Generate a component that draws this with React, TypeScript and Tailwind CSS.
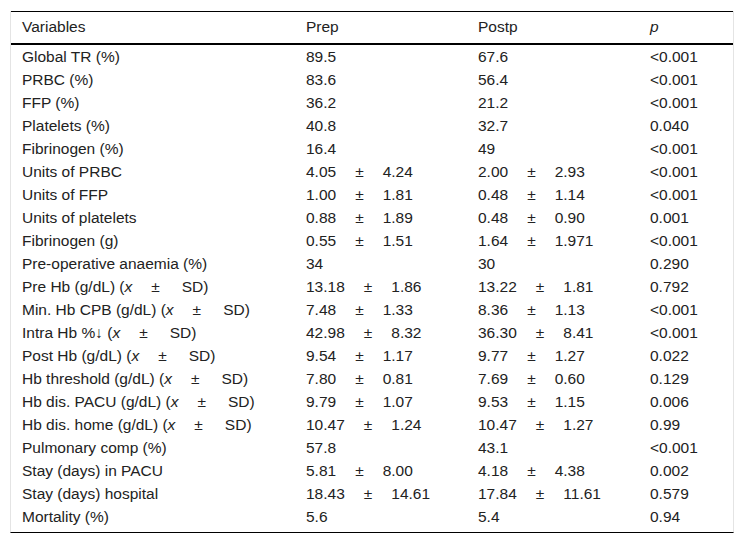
type Row = [React.ReactNode, React.ReactNode, React.ReactNode, string];

// mean ± SD pair, spaced out like the source table
function Val({ m, s }: { m: string; s: string }) {
  return (
    <>
      {m}
      <span className="mx-[19px]">±</span>
      {s}
    </>
  );
}

function Lbl({ t }: { t: string }) {
  return (
    <>
      {t} (<i>x</i>
      <span className="ml-[19px] mr-[22px]">±</span>SD)
    </>
  );
}

const rows: Row[] = [
  ["Global TR (%)", "89.5", "67.6", "<0.001"],
  ["PRBC (%)", "83.6", "56.4", "<0.001"],
  ["FFP (%)", "36.2", "21.2", "<0.001"],
  ["Platelets (%)", "40.8", "32.7", "0.040"],
  ["Fibrinogen (%)", "16.4", "49", "<0.001"],
  ["Units of PRBC", <Val m="4.05" s="4.24" />, <Val m="2.00" s="2.93" />, "<0.001"],
  ["Units of FFP", <Val m="1.00" s="1.81" />, <Val m="0.48" s="1.14" />, "<0.001"],
  ["Units of platelets", <Val m="0.88" s="1.89" />, <Val m="0.48" s="0.90" />, "0.001"],
  ["Fibrinogen (g)", <Val m="0.55" s="1.51" />, <Val m="1.64" s="1.971" />, "<0.001"],
  ["Pre-operative anaemia (%)", "34", "30", "0.290"],
  [<Lbl t="Pre Hb (g/dL)" />, <Val m="13.18" s="1.86" />, <Val m="13.22" s="1.81" />, "0.792"],
  [<Lbl t="Min. Hb CPB (g/dL)" />, <Val m="7.48" s="1.33" />, <Val m="8.36" s="1.13" />, "<0.001"],
  [<Lbl t="Intra Hb %↓" />, <Val m="42.98" s="8.32" />, <Val m="36.30" s="8.41" />, "<0.001"],
  [<Lbl t="Post Hb (g/dL)" />, <Val m="9.54" s="1.17" />, <Val m="9.77" s="1.27" />, "0.022"],
  [<Lbl t="Hb threshold (g/dL)" />, <Val m="7.80" s="0.81" />, <Val m="7.69" s="0.60" />, "0.129"],
  [<Lbl t="Hb dis. PACU (g/dL)" />, <Val m="9.79" s="1.07" />, <Val m="9.53" s="1.15" />, "0.006"],
  [<Lbl t="Hb dis. home (g/dL)" />, <Val m="10.47" s="1.24" />, <Val m="10.47" s="1.27" />, "0.99"],
  ["Pulmonary comp (%)", "57.8", "43.1", "<0.001"],
  ["Stay (days) in PACU", <Val m="5.81" s="8.00" />, <Val m="4.18" s="4.38" />, "0.002"],
  ["Stay (days) hospital", <Val m="18.43" s="14.61" />, <Val m="17.84" s="11.61" />, "0.579"],
  ["Mortality (%)", "5.6", "5.4", "0.94"],
];

const cols = "grid grid-cols-[284px_172px_172px_1fr]";

export default function App() {
  return (
    <div className="min-h-[545px] bg-white px-[10px] pt-[11px] font-['Liberation_Sans',Arial,sans-serif] text-[15.5px] text-[#222]">
      <div className="w-[724px] border-x border-x-[#e4e4e4] border-b border-b-black pb-[4px]">
        {/* Header */}
        <div className={`${cols} h-[34px] border-t border-t-black border-b-2 border-b-black items-center pb-[1px]`}>
          <div className="pl-[11px]">Variables</div>
          <div className="pl-[11px]">Prep</div>
          <div className="pl-[11px]">Postp</div>
          <div className="pl-[11px] italic">p</div>
        </div>

        {/* Body */}
        {rows.map((r, i) => (
          <div key={i} className={`${cols} h-[23px] items-center whitespace-nowrap`}>
            <div className="pl-[11px]">{r[0]}</div>
            <div className="pl-[11px]">{r[1]}</div>
            <div className="pl-[11px]">{r[2]}</div>
            <div className="pl-[11px]">{r[3]}</div>
          </div>
        ))}
      </div>
    </div>
  );
}
